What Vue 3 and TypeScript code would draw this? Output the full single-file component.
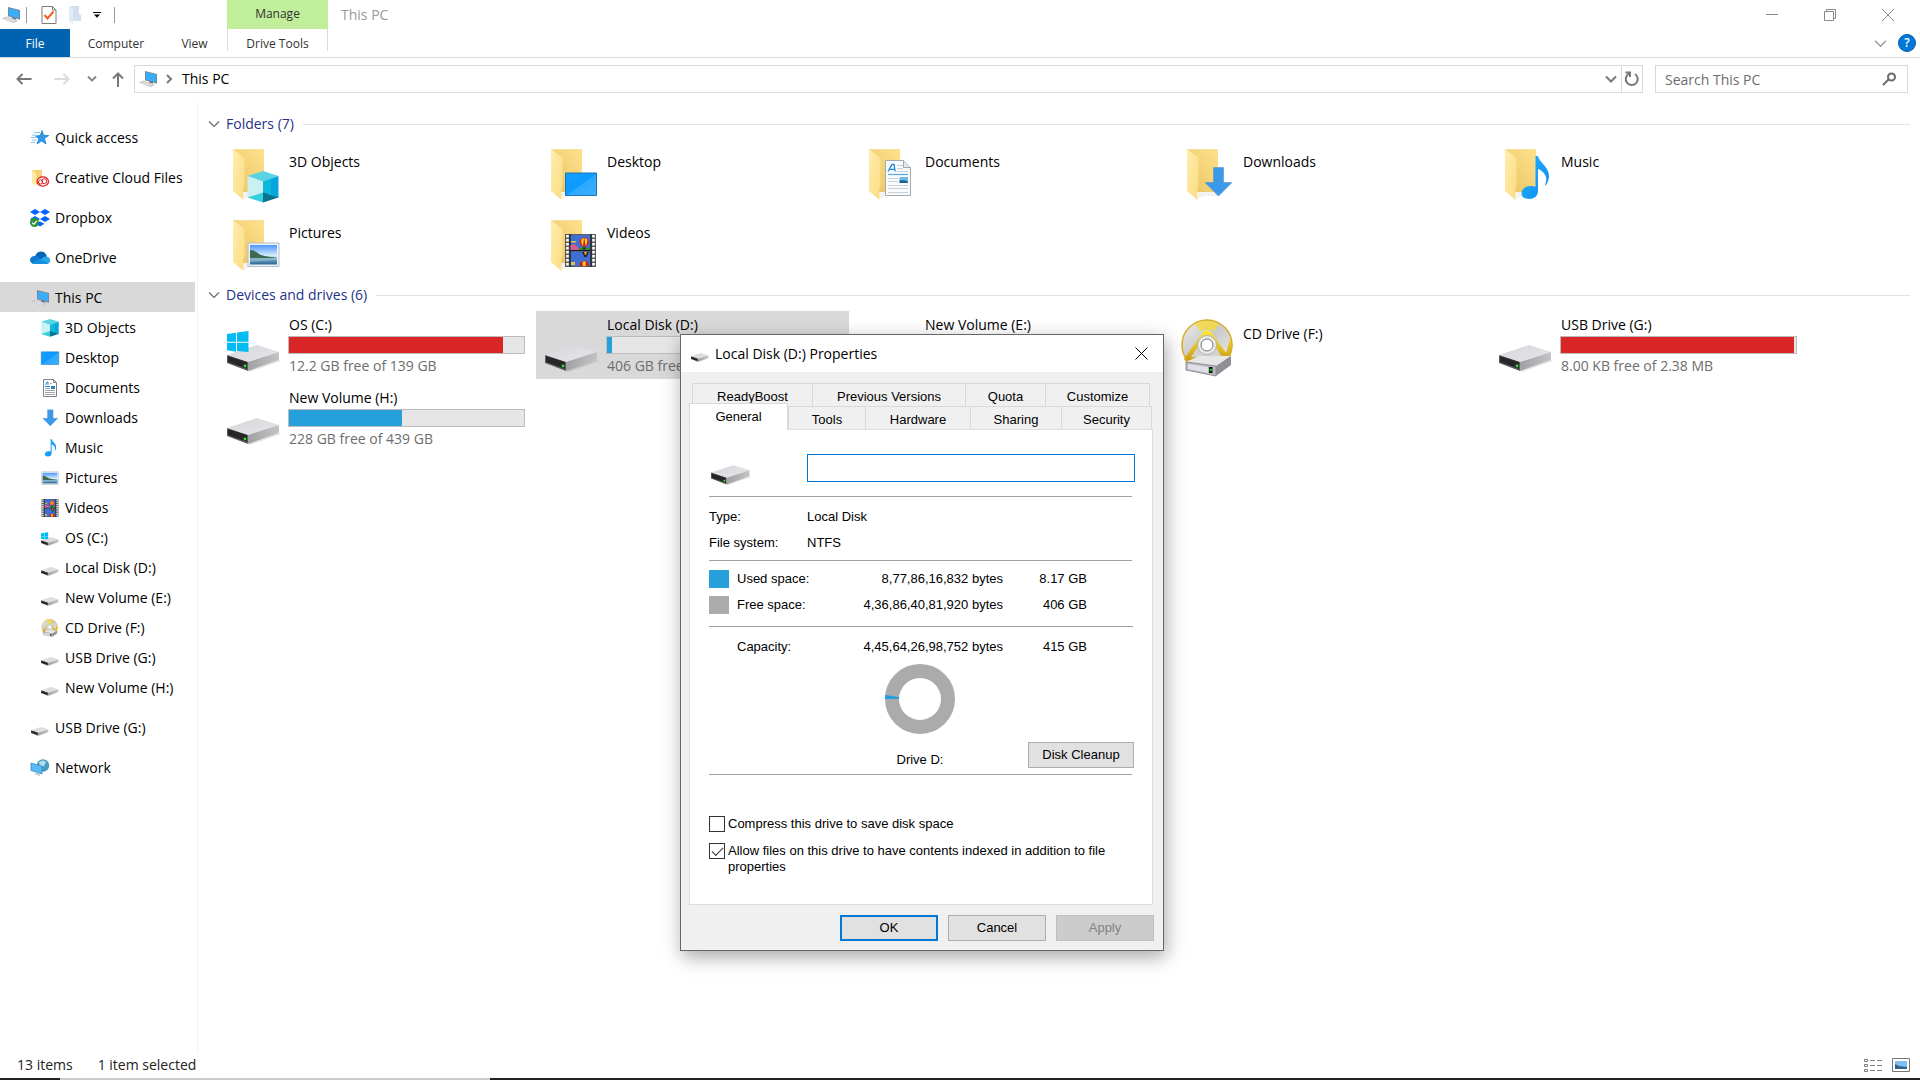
<script setup lang="ts">
import { ref } from 'vue'

interface NavItem {
  label: string
  icon: string
  child?: boolean
  current?: boolean
}
interface Drive {
  name: string
  icon: string
  used?: number
  full?: boolean
  info?: string
  selected?: boolean
}

const navItems: NavItem[] = [
  { label: 'Quick access', icon: 'star' },
  { label: 'Creative Cloud Files', icon: 'cc' },
  { label: 'Dropbox', icon: 'dropbox' },
  { label: 'OneDrive', icon: 'cloud' },
  { label: 'This PC', icon: 'pc', current: true },
  { label: '3D Objects', icon: 'cube', child: true },
  { label: 'Desktop', icon: 'screen', child: true },
  { label: 'Documents', icon: 'doc', child: true },
  { label: 'Downloads', icon: 'down', child: true },
  { label: 'Music', icon: 'note', child: true },
  { label: 'Pictures', icon: 'photo', child: true },
  { label: 'Videos', icon: 'film', child: true },
  { label: 'OS (C:)', icon: 'sysdrive', child: true },
  { label: 'Local Disk (D:)', icon: 'navdrive', child: true },
  { label: 'New Volume (E:)', icon: 'navdrive', child: true },
  { label: 'CD Drive (F:)', icon: 'cd', child: true },
  { label: 'USB Drive (G:)', icon: 'navdrive', child: true },
  { label: 'New Volume (H:)', icon: 'navdrive', child: true },
  { label: 'USB Drive (G:)', icon: 'navdrive' },
  { label: 'Network', icon: 'network' },
]

const folders = [
  { name: '3D Objects', icon: 'cube', x: 14, y: 22, w: 32, h: 32 },
  { name: 'Desktop', icon: 'screen', x: 14, y: 19, w: 32, h: 32 },
  { name: 'Documents', icon: 'doc', x: 11, y: 11, w: 36, h: 36 },
  { name: 'Downloads', icon: 'down', x: 15, y: 17, w: 32, h: 32 },
  { name: 'Music', icon: 'note', x: 7, y: 7, w: 44, h: 44 },
  { name: 'Pictures', icon: 'photo', x: 14, y: 18, w: 33, h: 33 },
  { name: 'Videos', icon: 'film', x: 13, y: 14, w: 33, h: 33 },
]

const drives: Drive[] = [
  { name: 'OS (C:)', icon: 'sysdrive', used: 91, full: true, info: '12.2 GB free of 139 GB' },
  { name: 'Local Disk (D:)', icon: 'drive', used: 2, info: '406 GB free of 415 GB', selected: true },
  { name: 'New Volume (E:)', icon: 'drive', used: 0 },
  { name: 'CD Drive (F:)', icon: 'cd' },
  { name: 'USB Drive (G:)', icon: 'drive', used: 99, full: true, info: '8.00 KB free of 2.38 MB' },
  { name: 'New Volume (H:)', icon: 'drive', used: 48, info: '228 GB free of 439 GB' },
]

const volumeLabel = ref('')
const compress = ref(false)
const indexed = ref(true)
</script>

<template>
  <div class="explorer">
    <svg class="sprites" aria-hidden="true">
      <defs>
        <linearGradient id="gTop" x1="0" y1="0" x2="1" y2="1"><stop offset="0" stop-color="#d6d7da" /><stop offset="1" stop-color="#e6e6ea" /></linearGradient>
        <linearGradient id="gSide" x1="0" y1="0" x2="1" y2="0"><stop offset="0" stop-color="#a0a1a3" /><stop offset="1" stop-color="#c3c4c6" /></linearGradient>
        <linearGradient id="gBack" x1="0" y1="1" x2="1" y2="0"><stop offset="0" stop-color="#e9c363" /><stop offset="1" stop-color="#ffe28c" /></linearGradient>
        <linearGradient id="gFlap" x1="0" y1="0" x2="1" y2="1"><stop offset="0" stop-color="#ffeeb0" /><stop offset="1" stop-color="#fbdc80" /></linearGradient>
        <linearGradient id="gBlue" x1="0" y1="0" x2="1" y2="1"><stop offset="0" stop-color="#16a0ff" /><stop offset=".5" stop-color="#0a99ff" /><stop offset=".52" stop-color="#2aa8ff" /><stop offset="1" stop-color="#3db1ff" /></linearGradient>
        <linearGradient id="gSky" x1="0" y1="0" x2="0" y2="1"><stop offset="0" stop-color="#4e97ff" /><stop offset=".55" stop-color="#d8ecfa" /><stop offset=".75" stop-color="#6a9fbe" /><stop offset="1" stop-color="#2b6690" /></linearGradient>
        <linearGradient id="gDisc" x1="0" y1="0" x2="1" y2="1"><stop offset="0" stop-color="#efefef" /><stop offset=".45" stop-color="#c9c9c9" /><stop offset="1" stop-color="#f5f5f5" /></linearGradient>
        <linearGradient id="gGold" x1="0" y1="0" x2="0" y2="1"><stop offset="0" stop-color="#ffe83d" /><stop offset="1" stop-color="#c9980c" /></linearGradient>
        <linearGradient id="gNote" x1="0" y1="0" x2="1" y2="1"><stop offset="0" stop-color="#26b4ff" /><stop offset="1" stop-color="#0a8cf0" /></linearGradient>
      </defs>

      <symbol id="body" viewBox="0 0 54 28">
        <path d="M21 25l31-10 2 1-31 11z" fill="#000" opacity=".1" />
        <path d="M0 10L30 0l22 7-31 10z" fill="url(#gTop)" />
        <path d="M21 17L52 7v8L21 26z" fill="url(#gSide)" />
        <path d="M0 10l21 7v9L0 18z" fill="#5d5e60" />
        <path d="M1 11l19 6v7L1 17z" fill="#262626" />
        <circle cx="18" cy="21" r="1.4" fill="#2fe02f" />
      </symbol>
      <symbol id="drive" viewBox="0 0 54 54"><use href="#body" x="0" y="24" width="54" height="28" /></symbol>
      <symbol id="navdrive" viewBox="0 0 54 54"><use href="#body" x="0" y="24" width="54" height="28" /></symbol>
      <symbol id="sysdrive" viewBox="0 0 54 54">
        <use href="#body" x="0" y="24" width="54" height="28" />
        <path d="M0 13l9-1.300v9H0zm10-1.400L21.500 10v10.700H10zM0 21.700h9v9L0 29.300zm10 0h11.500V31L10 30z" fill="#00bcf2" />
      </symbol>

      <symbol id="folder" viewBox="0 0 48 54">
        <path d="M11 50l6-3h14v-4h-20z" fill="#000" opacity=".05" />
        <path d="M0 0h31v43H10z" fill="url(#gBack)" />
        <path d="M0 0l11.500 9v28l-1 1V51L0 42z" fill="url(#gFlap)" />
        <path d="M0 .5h31" stroke="#f3dfa0" />
      </symbol>
      <symbol id="cube" viewBox="0 0 32 32">
        <path d="M16 0l15.500 5L16 10.500.5 5z" fill="#59d3e3" />
        <path d="M.5 5L16 10.500V22L.5 27z" fill="#c9f1f2" />
        <path d="M31.500 5L16 10.500V22l15.500 5z" fill="#06a7dc" />
        <path d="M16 10.500L24 7.600V24l-8-2z" fill="#10c0dd" opacity=".7" />
        <path d="M16 21.500v10L.5 26.500z" fill="#35d0dc" />
        <path d="M16 21.500v10l15.500-5z" fill="#0a7390" />
      </symbol>
      <symbol id="screen" viewBox="0 0 32 32">
        <path d="M.5 5h31v22.500H.5z" fill="url(#gBlue)" stroke="#2272b4" />
      </symbol>
      <symbol id="doc" viewBox="0 0 36 36">
        <path d="M5.500.5h18l7 7v28h-25z" fill="#f9fafb" stroke="#a4a8ad" />
        <path d="M23.500.5v7h7" fill="#e3e5e8" stroke="#a4a8ad" />
        <path d="M8 11.500l4-7h2l1.200 7M10 9.300h4.500" fill="none" stroke="#2186d8" stroke-width="1.300" />
        <path d="M8 14.500h20" stroke="#56a8dd" stroke-width="1.200" />
        <path d="M17 5.500h6M17 8.500h6M17 11.500h11M8 18.500h10M8 21.500h10M8 25.500h20M8 28.500h20M8 32.500h20" stroke="#c9d2dc" />
        <path d="M19.500 17H28v6h-8.500z" fill="#6db8ea" /><path d="M19.500 20.500L24 20l4 1.500V23h-8.500z" fill="#1f6391" />
      </symbol>
      <symbol id="smalldoc" viewBox="0 0 18 18">
        <path d="M2.500.5h10l3 3v14h-13z" fill="#fff" stroke="#7f8286" />
        <path d="M12.500.5v3h3" fill="none" stroke="#7f8286" />
        <path d="M4.500 6l1.500-3h1v3" fill="none" stroke="#2186d8" />
        <path d="M4 7.500h5" stroke="#2186d8" />
        <path d="M9 4.500h2M4 9.500h5M4 11.500h10M4 13.500h10M4 15.500h10" stroke="#9fa8b2" />
        <path d="M10 7h4v3h-4z" fill="#2c7fb8" />
      </symbol>
      <symbol id="down" viewBox="0 0 32 32">
        <path d="M11.500 1.500h10v15H30L16.500 30 3 16.500h8.500z" fill="#3b99ea" stroke="#5b92bf" stroke-width=".6" />
      </symbol>
      <symbol id="note" viewBox="0 0 44 44">
        <path d="M23.500 0H26c1 6 11 11 11 20 0 4-2 8-4 10 0-2 2-5 1-9-1-4-5-7-8-8v22c0 5-4 8-9 8-4.500 0-7.500-2-7.500-5.500 0-4.500 4-7.500 9-7.500 2 0 4 .3 5 1z" fill="url(#gNote)" />
      </symbol>
      <symbol id="photo" viewBox="0 0 33 33">
        <path d="M1 5h31v23.500H1z" fill="#eef3fa" stroke="#b4bcc8" />
        <path d="M3 7h27v19.500H3z" fill="url(#gSky)" />
        <path d="M3 12c5 0 7 3 11 5 5 1.500 11 2 16 3H3z" fill="#3e6a4f" />
        <path d="M3 20h27v2L3 24z" fill="#8fb8c9" opacity=".7" />
      </symbol>
      <symbol id="film" viewBox="0 0 33 33">
        <path d="M1 0h31v33H1z" fill="#5b5b5b" />
        <path d="M3.500 1v32M29.500 1v32" stroke="#fff" stroke-width="2.600" stroke-dasharray="2.400 1.600" />
        <path d="M6.500 1h20v15h-20zM6.500 17.500h20V32h-20z" fill="#3f6fd0" />
        <path d="M6 0v33M27 0v33M6 16.500h21" stroke="#1c1c1c" stroke-width="1.200" />
        <path d="M6.500 11l4-1 3 3 3 3h-10z" fill="#d55a8e" /><path d="M15 13.500h11V16H15z" fill="#2d8a33" />
        <path d="M15.500 8c0-6 9.500-6 9.500 0 0 2-2 4-3.500 5h-2.500c-1.500-1-3.500-3-3.500-5z" fill="#c9231f" />
        <path d="M17.500 5q-1 4 1.500 7l1-8zM23 5q1 4-1.500 7l-1-8z" fill="#ffc926" /><path d="M19.300 13.500h2v2h-2z" fill="#222" />
        <path d="M7 7h5v1.500H7z" fill="#e7c34c" />
        <path d="M18 18h7l-2.500 5h-2z" fill="#272033" /><path d="M20 18h3l-1 3h-1z" fill="#eaa21f" />
        <path d="M15.500 32c0-7 9.500-7 9.500 0z" fill="#c9231f" /><path d="M18.700 27.500h3V32h-3z" fill="#ffc926" /><path d="M7 28h4v3H7z" fill="#e7c34c" />
      </symbol>
      <symbol id="cd" viewBox="0 0 54 58">
        <circle cx="26" cy="26" r="25.500" fill="url(#gDisc)" />
        <path d="M3 40L22 13q4-4 8 0l15 21 4-14 1-2q4 14-4 24L6 44z" fill="url(#gGold)" />
        <path d="M10 38L22 20h8l12 20z" fill="#d2d2d2" />
        <path d="M14 4.500Q26-1 38 4.500L33 12q-7-3-14 0z" fill="#f7d92c" opacity=".75" />
        <circle cx="26" cy="26" r="25" fill="none" stroke="#d9b02c" stroke-width="1.500" />
        <circle cx="26" cy="26" r="9.500" fill="#e9e9e9" stroke="#b4b4b4" />
        <circle cx="26" cy="26" r="6" fill="#fff" stroke="#777" />
        <path d="M5 43l13-6h32l-14 10z" fill="#e6e6e6" />
        <path d="M5 43l30 4v10L5 51z" fill="#b9bac0" stroke="#808086" stroke-width=".8" />
        <path d="M35 47l15-10v9L35 57z" fill="#8f9095" />
        <path d="M7 45l20 3v6L7 50z" fill="#e0e0e8" /><path d="M28 48h3.500v6H28z" fill="#111" /><circle cx="29.800" cy="51" r="1.300" fill="#1bd31b" />
      </symbol>

      <symbol id="pc" viewBox="0 0 20 18">
        <path d="M7 1l12 3v9.700L7 10.200z" fill="#7d848c" />
        <path d="M7.800 2l10.400 2.700v7.800L7.800 9.500z" fill="#39adfa" />
        <path d="M11 11l4 1.300v1.500l-4-1.300z" fill="#6d7277" />
        <path d="M1 12.500l4.500-2L17 14.800l-4.500 2.500z" fill="#bfc4c9" />
        <path d="M3.500 12.600l9.500 3.600M5 11.700l9.500 3.600" stroke="#f3f4f5" stroke-width=".7" />
      </symbol>
      <symbol id="star" viewBox="0 0 18 18">
        <path d="M11 1.500l1.600 4.800 5.100.2-4.200 3 1.500 5.500-4.500-3L6 15l2-5.200L4.500 7l4.700-.4z" fill="#2f9be8" stroke="#1c82cf" stroke-width=".8" />
        <path d="M3 3.500h6M1 6h4M0 8.500h5M1 11h4.500M0 13.500h4" stroke="#7bbdec" stroke-width=".9" />
      </symbol>
      <symbol id="cc" viewBox="0 0 18 18">
        <path d="M1 1h10v14H4z" fill="#f4d274" /><path d="M1 1l4 3v13l-4-3z" fill="#ffe9a6" />
        <ellipse cx="11.800" cy="12.500" rx="5.700" ry="4.600" fill="#fff" stroke="#df1f1f" stroke-width="1.200" />
        <circle cx="9.600" cy="13" r="2.100" fill="none" stroke="#df1f1f" />
        <circle cx="13.300" cy="12.200" r="2.400" fill="none" stroke="#df1f1f" />
      </symbol>
      <symbol id="dropbox" viewBox="0 0 20 18">
        <path d="M5 0l5 3-5 3-5-3zM15 0l5 3-5 3-5-3zM5 7l5 3-5 3-5-3zM15 7l5 3-5 3-5-3zM10 12.500l4.500 2.300L10 17.500l-4.500-2.700z" fill="#0062ff" />
        <circle cx="4.500" cy="13.500" r="4.500" fill="#2c9433" /><path d="M2.300 13.600l1.600 1.600 2.900-3.300" fill="none" stroke="#fff" stroke-width="1.300" />
      </symbol>
      <symbol id="cloud" viewBox="0 0 20 18">
        <path d="M5 7.500C6 4 8.500 2.500 11 2.500c3 0 5.300 2 5.800 5L10 11z" fill="#0364b8" />
        <path d="M4.500 15C2 15 0 13.300 0 11c0-2.300 2-4 4.500-4 3.500-.3 6 2 8 3.500l-3 4.500z" fill="#0f78d4" />
        <path d="M4 15l9-6.500c2-1.300 4-1 5.500-.2C20 9.200 20.300 11 20 12.300 19.600 14 18 15 16 15z" fill="#28a8ea" />
        <path d="M2 14l8-4 8.500 4.200Q17.500 15 16 15H4.500Q3 15 2 14z" fill="#1490df" />
      </symbol>
      <symbol id="network" viewBox="0 0 18 18">
        <circle cx="12" cy="6.500" r="6.200" fill="#4a9bbf" /><path d="M8 3q4-3 7 0l-2 4-4 1z" fill="#b6ddeb" />
        <path d="M0 4l11 3v8L0 11.500z" fill="#57b9f8" stroke="#3783b8" stroke-width=".7" />
        <path d="M5 13.500l4 1.200V17l-5-1.200z" fill="#c7ccd0" />
      </symbol>
      <symbol id="chevDown" viewBox="0 0 12 12"><path d="M1 3.500l5 5 5-5" fill="none" stroke="currentColor" stroke-width="1.200" /></symbol>
    </svg>

    <header class="top">
      <div class="titlebar">
        <div class="quick">
          <svg class="i20"><use href="#pc" /></svg>
          <span class="sep"></span>
          <button class="plain" type="button" aria-label="Properties">
            <svg width="16" height="18" viewBox="0 0 16 18"><path d="M1 .5h10.500l3.500 3.500v13.500H1z" fill="#fff" stroke="#7c7c7c" /><path d="M11.500.5V4H15" fill="none" stroke="#7c7c7c" /><path d="M3.500 9l3 3.500 6-7" fill="none" stroke="#f25c1d" stroke-width="2" /></svg>
          </button>
          <button class="plain" type="button" aria-label="New folder">
            <svg width="12" height="18" viewBox="0 0 12 18"><path d="M1 0h9v8l2 1v6H4z" fill="#d3dfee" /><path d="M0 0l4 2v16l-4-3z" fill="#e3ebf5" /></svg>
          </button>
          <button class="plain more" type="button" aria-label="Customize toolbar">
            <svg width="8" height="6" viewBox="0 0 8 6"><path d="M0 .5h8" stroke="#000" /><path d="M1 2.500h6L4 5.800z" /></svg>
          </button>
          <span class="sep"></span>
        </div>
        <div class="manage">Manage</div>
        <h1>This PC</h1>
        <div class="controls">
          <button type="button" aria-label="Minimize"><svg width="12" height="12"><path d="M0 5.500h12" stroke="#8a8a8a" /></svg></button>
          <button type="button" aria-label="Restore"><svg width="12" height="12" fill="none" stroke="#8a8a8a"><path d="M.5 2.500h9v9h-9zM2.500 2.500v-2h9v9h-2" /></svg></button>
          <button type="button" aria-label="Close"><svg width="12" height="12" stroke="#8a8a8a"><path d="M0 0l12 12M12 0L0 12" /></svg></button>
        </div>
      </div>
      <nav class="ribbon">
        <button type="button" class="file">File</button>
        <button type="button" class="computer">Computer</button>
        <button type="button" class="view">View</button>
        <button type="button" class="tools">Drive Tools</button>
        <div class="ribbon-end">
          <button type="button" class="plain" aria-label="Expand ribbon"><svg width="13" height="13" color="#9a9a9a"><use href="#chevDown" /></svg></button>
          <button type="button" class="help" aria-label="Help">?</button>
        </div>
      </nav>
      <div class="address-row">
        <div class="arrows">
          <button type="button" class="plain" aria-label="Back"><svg width="16" height="12" fill="none" stroke="#777" stroke-width="2"><path d="M15.500 6H1.500M6.500 1l-5 5 5 5" /></svg></button>
          <button type="button" class="plain" aria-label="Forward"><svg width="16" height="12" fill="none" stroke="#dadada" stroke-width="2"><path d="M.5 6h14M9.500 1l5 5-5 5" /></svg></button>
          <button type="button" class="plain" aria-label="Recent"><svg width="10" height="8" fill="none" stroke="#8a8a8a" stroke-width="2"><path d="M1 1.500l4 4 4-4" /></svg></button>
          <button type="button" class="plain" aria-label="Up"><svg width="12" height="15" fill="none" stroke="#777" stroke-width="2"><path d="M6 15V1.500M1 6.500l5-5 5 5" /></svg></button>
        </div>
        <div class="address">
          <svg class="i20"><use href="#pc" /></svg>
          <svg width="8" height="10" fill="none" stroke="#7a7a7a" stroke-width="2"><path d="M2 1l4 4-4 4" /></svg>
          <a href="#">This PC</a>
          <button type="button" class="plain drop" aria-label="Previous locations"><svg width="12" height="8" fill="none" stroke="#777" stroke-width="2"><path d="M1 1.500l5 5 5-5" /></svg></button>
          <button type="button" class="plain refresh" aria-label="Refresh"><svg width="16" height="16" fill="none" stroke="#777" stroke-width="2"><path d="M11 3a6 6 0 1 1-6-.3" /><path d="M1.500 1.500H6v4.500" /></svg></button>
        </div>
        <label class="search">
          <input type="text" placeholder="Search This PC" aria-label="Search This PC" />
          <svg width="14" height="14" fill="none" stroke="#6b6b6b"><circle cx="9.500" cy="5" r="3.500" stroke-width="2" /><path d="M6.500 7.500L1 13" stroke-width="2" /></svg>
        </label>
      </div>
    </header>

    <div class="middle">
      <nav class="side">
        <a v-for="(n, i) in navItems" :key="i" href="#" :class="{ child: n.child, current: n.current }">
          <svg class="i20"><use :href="n.icon === 'doc' ? '#smalldoc' : '#' + n.icon" /></svg>{{ n.label }}
        </a>
      </nav>
      <main>
        <section>
          <h2><svg width="12" height="12" color="#6a6a6a"><use href="#chevDown" /></svg>Folders (7)</h2>
          <ul>
            <li v-for="f in folders" :key="f.name" class="folder">
              <svg width="52" height="54" viewBox="0 0 52 54">
                <use href="#folder" width="48" height="54" />
                <use :href="'#' + f.icon" :x="f.x" :y="f.y" :width="f.w" :height="f.h" />
              </svg>
              <span>{{ f.name }}</span>
            </li>
          </ul>
        </section>
        <section>
          <h2><svg width="12" height="12" color="#6a6a6a"><use href="#chevDown" /></svg>Devices and drives (6)</h2>
          <ul>
            <li v-for="d in drives" :key="d.name" class="drive" :class="{ selected: d.selected, disc: d.icon === 'cd' }">
              <svg width="54" height="58"><use :href="'#' + d.icon" /></svg>
              <div class="meta">
                <span>{{ d.name }}</span>
                <div v-if="d.used !== undefined" class="bar"><div :class="{ full: d.full }" :style="{ width: d.used + '%' }"></div></div>
                <span v-if="d.info" class="info">{{ d.info }}</span>
              </div>
            </li>
          </ul>
        </section>
      </main>
    </div>

    <footer class="status">
      <span>13 items</span><span>1 item selected</span>
      <div class="modes">
        <button type="button" class="plain" aria-label="Details"><svg width="18" height="14" stroke="#7f7f7f" fill="none"><path d="M.5 1.500h3v2h-3zM.5 6.500h3v2h-3zM.5 11.500h3v2h-3zM6 2.500h5M6 7.500h5M6 12.500h5M13 2.500h5M13 7.500h5M13 12.500h5" /></svg></button>
        <button type="button" class="plain" aria-label="Large icons"><svg width="18" height="14"><path d="M.5.5h17v13H.5z" fill="#fff" stroke="#777" /><path d="M3 3h12v8H3z" fill="#7fc0f2" /><path d="M3 6l4 2 8 1v2H3z" fill="#2f6488" /></svg></button>
      </div>
    </footer>
    <div class="taskbar"><i></i></div>

    <div class="dialog" role="dialog" aria-labelledby="dlgTitle">
      <div class="dlg-title">
        <svg width="18" height="18"><use href="#navdrive" /></svg>
        <span id="dlgTitle">Local Disk (D:) Properties</span>
        <button type="button" class="plain" aria-label="Close"><svg width="13" height="13" stroke="#000"><path d="M.5 .5l12 12M12.500 .5l-12 12" /></svg></button>
      </div>
      <div class="tabs back">
        <button type="button" class="w120">ReadyBoost</button>
        <button type="button" class="w153">Previous Versions</button>
        <button type="button" class="w80">Quota</button>
        <button type="button" class="w105">Customize</button>
      </div>
      <div class="tabs front">
        <button type="button" class="active">General</button>
        <button type="button" class="w77">Tools</button>
        <button type="button" class="w105">Hardware</button>
        <button type="button" class="w90">Sharing</button>
        <button type="button" class="w90">Security</button>
      </div>
      <div class="panel">
        <div class="label-row">
          <svg width="40" height="21" viewBox="0 0 54 28"><use href="#body" /></svg>
          <input v-model="volumeLabel" type="text" aria-label="Volume label" />
        </div>
        <dl>
          <dt>Type:</dt><dd>Local Disk</dd>
          <dt>File system:</dt><dd>NTFS</dd>
        </dl>
        <table>
          <tbody>
            <tr><td class="key"><i class="used"></i></td><th scope="row">Used space:</th><td class="bytes">8,77,86,16,832 bytes</td><td class="gb">8.17 GB</td></tr>
            <tr><td class="key"><i class="free"></i></td><th scope="row">Free space:</th><td class="bytes">4,36,86,40,81,920 bytes</td><td class="gb">406 GB</td></tr>
          </tbody>
          <tbody class="total">
            <tr><td class="key"></td><th scope="row">Capacity:</th><td class="bytes">4,45,64,26,98,752 bytes</td><td class="gb">415 GB</td></tr>
          </tbody>
        </table>
        <div class="chart">
          <figure>
            <svg width="70" height="70" viewBox="0 0 70 70">
              <circle cx="35" cy="35" r="28" fill="none" stroke="#ababab" stroke-width="14" />
              <path d="M0 35v-4l14 2v2z" fill="#26a0da" />
            </svg>
            <figcaption>Drive D:</figcaption>
          </figure>
          <button type="button" class="btn">Disk Cleanup</button>
        </div>
        <div class="checks">
          <label><input v-model="compress" type="checkbox" /><span>Compress this drive to save disk space</span></label>
          <label><input v-model="indexed" type="checkbox" /><span>Allow files on this drive to have contents indexed in addition to file properties</span></label>
        </div>
      </div>
      <div class="actions">
        <button type="button" class="btn primary">OK</button>
        <button type="button" class="btn">Cancel</button>
        <button type="button" class="btn" disabled>Apply</button>
      </div>
    </div>
  </div>
</template>

<style>
body {
  margin: 0;
  background: #fff;
}
</style>

<style scoped>
* {
  box-sizing: border-box;
}
.explorer {
  position: relative;
  display: flex;
  flex-direction: column;
  min-height: 100vh;
  overflow: hidden;
  background: #fff;
  color: #000;
  font: 14px/20px "Open Sans", "Noto Sans", sans-serif;
}
.sprites {
  position: absolute;
  width: 0;
  height: 0;
}
svg {
  display: block;
  flex: none;
}
button {
  padding: 0;
  border: 0;
  background: none;
  color: inherit;
  font: inherit;
}
.plain {
  display: flex;
  align-items: center;
  justify-content: center;
}
a {
  color: inherit;
  text-decoration: none;
}
.i20 {
  width: 20px;
  height: 18px;
}

.titlebar {
  display: flex;
  height: 29px;
}
.quick {
  display: flex;
  align-items: center;
  width: 227px;
  padding-left: 1px;
}
.quick .sep {
  width: 1px;
  height: 16px;
  margin-left: 5px;
  background: #999;
}
.quick .plain {
  margin-left: 14px;
}
.quick .plain + .plain {
  margin-left: 12px;
}
.quick .plain + .sep {
  margin-left: 13px;
}
.manage {
  width: 101px;
  background: #c0ee9b;
  color: #333;
  font-size: 12px;
  line-height: 27px;
  text-align: center;
}
h1 {
  margin: 0 0 0 13px;
  color: #999;
  font-size: 14px;
  font-weight: 400;
  line-height: 29px;
}
.controls {
  display: flex;
  margin-left: auto;
  padding-right: 3px;
}
.controls button {
  display: flex;
  align-items: center;
  justify-content: center;
  width: 58px;
}
.ribbon {
  display: flex;
  height: 29px;
  border-bottom: 1px solid #dadbdc;
  color: #333;
  font-size: 12px;
  line-height: 20px;
}
.ribbon > button {
  padding-top: 2px;
}
.ribbon .file {
  width: 70px;
  background: #0063b1;
  color: #fff;
}
.ribbon .computer {
  width: 92px;
}
.ribbon .view {
  width: 65px;
}
.ribbon .tools {
  width: 101px;
  height: 22px;
  padding-top: 5px;
  border: solid #dadbdc;
  border-width: 0 1px;
}
.ribbon-end {
  display: flex;
  align-items: center;
  gap: 11px;
  margin-left: auto;
  padding-right: 4px;
}
.help {
  width: 18px;
  height: 18px;
  border: 1px solid #0b5cab;
  border-radius: 50%;
  background: #0078d7;
  color: #fff;
  font-size: 12px;
  font-weight: 600;
  line-height: 16px;
}
.address-row {
  display: flex;
  height: 44px;
  padding: 7px 12px 9px 16px;
}
.arrows {
  display: flex;
  align-items: center;
  width: 118px;
}
.arrows .plain + .plain {
  margin-left: 22px;
}
.arrows .plain:nth-child(3) {
  margin-left: 17px;
}
.arrows .plain:nth-child(4) {
  margin-left: 15px;
}
.address {
  display: flex;
  flex: 1;
  align-items: center;
  margin-right: 12px;
  padding-left: 3px;
  border: 1px solid #d9d9d9;
}
.address svg + svg {
  margin: 0 9px 0 7px;
}
.address .drop {
  width: 20px;
  height: 26px;
  margin-left: auto;
}
.address .refresh {
  width: 21px;
  height: 26px;
  border-left: 1px solid #d9d9d9;
}
.search {
  display: flex;
  align-items: center;
  width: 253px;
  padding: 0 11px 0 9px;
  border: 1px solid #d9d9d9;
}
.search input {
  flex: 1;
  min-width: 0;
  padding: 1px 0 0;
  border: 0;
  outline: 0;
  background: none;
  font: inherit;
}
.search input::placeholder {
  color: #6d6d6d;
  opacity: 1;
}

.middle {
  display: flex;
  flex: 1;
}
.side {
  display: flex;
  flex-direction: column;
  width: 198px;
  padding: 20px 2px 0 0;
  border-right: 1px solid #f2f2f2;
}
.side a {
  display: flex;
  align-items: center;
  gap: 5px;
  height: 30px;
  padding: 1px 0 0 30px;
  white-space: nowrap;
}
.side a:not(.child) + a:not(.child),
.side .child + a:not(.child) {
  margin-top: 10px;
}
.side .child {
  padding-left: 40px;
}
.side .current {
  background: #d9d9d9;
}
main {
  flex: 1;
  padding: 10px 10px 0 10px;
}
h2 {
  display: flex;
  align-items: center;
  height: 24px;
  margin: 0;
  color: #1e3287;
  font-size: 14px;
  font-weight: 400;
}
h2 svg {
  margin-right: 6px;
}
h2::after {
  content: "";
  flex: 1;
  height: 1px;
  margin-left: 9px;
  background: #e2e2e2;
}
ul {
  display: grid;
  grid-template-columns: repeat(auto-fill, 313px);
  gap: 5px;
  margin: 0;
  padding: 7px 0 3px 10px;
  list-style: none;
}
section + section ul {
  padding-top: 4px;
}
.folder {
  display: flex;
  gap: 4px;
  height: 66px;
  padding: 6px 0 0 15px;
}
.folder span {
  padding-top: 3px;
}
.drive {
  display: flex;
  gap: 7px;
  height: 68px;
  padding: 4px 0 0 9px;
}
.drive > svg {
  margin-top: 4px;
}
.drive.selected {
  background: #d9d9d9;
}
.drive.disc {
  padding-top: 8px;
}
.drive.disc > svg {
  margin-top: 0;
}
.drive.disc .meta {
  padding-top: 5px;
}
.meta {
  display: flex;
  flex-direction: column;
  gap: 1px;
  padding-left: 1px;
}
.bar {
  width: 237px;
  height: 18px;
  margin: 0 0 1px -1px;
  border: 1px solid #bcbcbc;
  background: #e6e6e6;
}
.bar div {
  height: 100%;
  background: #26a0da;
}
.bar .full {
  background: #da2626;
}
.info {
  color: #6d6d6d;
}

.status {
  display: flex;
  align-items: center;
  gap: 25px;
  height: 26px;
  padding: 0 10px 0 17px;
  color: #222;
}
.modes {
  display: flex;
  gap: 10px;
  margin-left: auto;
}
.taskbar {
  height: 2px;
  padding-left: 60px;
  background: #222;
}
.taskbar i {
  display: block;
  width: 430px;
  height: 2px;
  background: #ccc;
}

.dialog {
  position: absolute;
  top: 334px;
  left: 680px;
  width: 484px;
  padding-bottom: 9px;
  border: 1px solid #666;
  background: #f0f0f0;
  box-shadow: 2px 6px 18px rgba(0, 0, 0, 0.35);
  font: 13px/16px "Liberation Sans", Arial, sans-serif;
}
.dlg-title {
  display: flex;
  align-items: center;
  gap: 6px;
  height: 37px;
  padding: 0 15px 0 10px;
  background: #fff;
  font: 14px/20px "Open Sans", "Noto Sans", sans-serif;
}
.dlg-title .plain {
  margin-left: auto;
}
.tabs {
  display: flex;
}
.tabs button {
  height: 23px;
  padding-top: 4px;
  border: solid #d9d9d9;
  border-width: 1px 0 0 1px;
}
.tabs button:last-child {
  border-right-width: 1px;
}
.back {
  margin: 11px 0 0 11px;
}
.front {
  align-items: flex-end;
  height: 23px;
  padding-left: 8px;
}
.tabs .active {
  z-index: 1;
  width: 99px;
  height: 27px;
  margin-bottom: -1px;
  padding: 0;
  border-right-width: 1px;
  background: #fff;
}
.w77 {
  width: 77px;
}
.w80 {
  width: 80px;
}
.w90 {
  width: 91px;
}
.w105 {
  width: 105px;
}
.w120 {
  width: 120px;
}
.w153 {
  width: 153px;
}
.panel {
  height: 476px;
  margin: 0 10px 0 8px;
  padding: 24px 17px 0 19px;
  border: 1px solid #dcdcdc;
  background: #fff;
}
.label-row {
  display: flex;
  align-items: flex-end;
  justify-content: space-between;
  height: 28px;
}
.label-row svg {
  margin: 0 0 -4px 2px;
}
.label-row input {
  width: 328px;
  height: 28px;
  padding: 0 6px;
  border: 1px solid #0078d7;
  outline: 0;
  font: inherit;
}
dl {
  display: grid;
  grid-template-columns: 98px 1fr;
  row-gap: 10px;
  margin: 14px 3px 0 0;
  padding: 12px 0 9px;
  border: solid #a0a0a0;
  border-width: 1px 0;
}
dd {
  margin: 0;
}
table {
  width: 424px;
  border-collapse: collapse;
}
td,
th {
  padding: 0;
  font-weight: 400;
  text-align: left;
}
tbody tr {
  height: 26px;
}
tbody:first-child::before,
tbody:first-child::after {
  content: "";
  display: block;
  height: 5px;
}
tbody:first-child::after {
  height: 8px;
}
.total {
  border-top: 1px solid #a0a0a0;
}
.total tr {
  height: 40px;
}
.key {
  width: 28px;
}
.key i {
  display: block;
  width: 20px;
  height: 18px;
}
.key .used {
  background: #26a0da;
}
.key .free {
  background: #ababab;
}
.bytes {
  width: 166px;
  text-align: right;
}
.gb {
  width: 130px;
  padding-right: 46px;
  text-align: right;
}
.chart {
  display: flex;
  align-items: flex-end;
  justify-content: space-between;
  height: 108px;
  margin-right: 3px;
  padding: 0 0 6px 176px;
  border-bottom: 1px solid #a0a0a0;
}
figure {
  display: flex;
  flex-direction: column;
  align-items: center;
  gap: 18px;
  margin: 0;
}
.btn {
  width: 98px;
  height: 26px;
  border: 1px solid #adadad;
  background: #e1e1e1;
}
.chart .btn {
  width: 106px;
  margin-right: -2px;
}
.checks {
  display: flex;
  flex-direction: column;
  gap: 11px;
  padding-top: 41px;
}
.checks label {
  display: flex;
  gap: 3px;
}
.checks input {
  flex: none;
  width: 16px;
  height: 16px;
  margin: 0;
  border: 1px solid #333;
  background: #fff;
  appearance: none;
}
.checks input:checked::after {
  content: "";
  display: block;
  width: 10px;
  height: 5px;
  margin: 3px 2px;
  border: solid #333;
  border-width: 0 0 1px 1px;
  transform: rotate(-45deg);
}
.actions {
  display: flex;
  gap: 10px;
  justify-content: flex-end;
  padding: 10px 9px 0 0;
}
.primary {
  border: 2px solid #0078d7;
}
.btn:disabled {
  border-color: #bfbfbf;
  background: #ccc;
  color: #838383;
}
</style>
